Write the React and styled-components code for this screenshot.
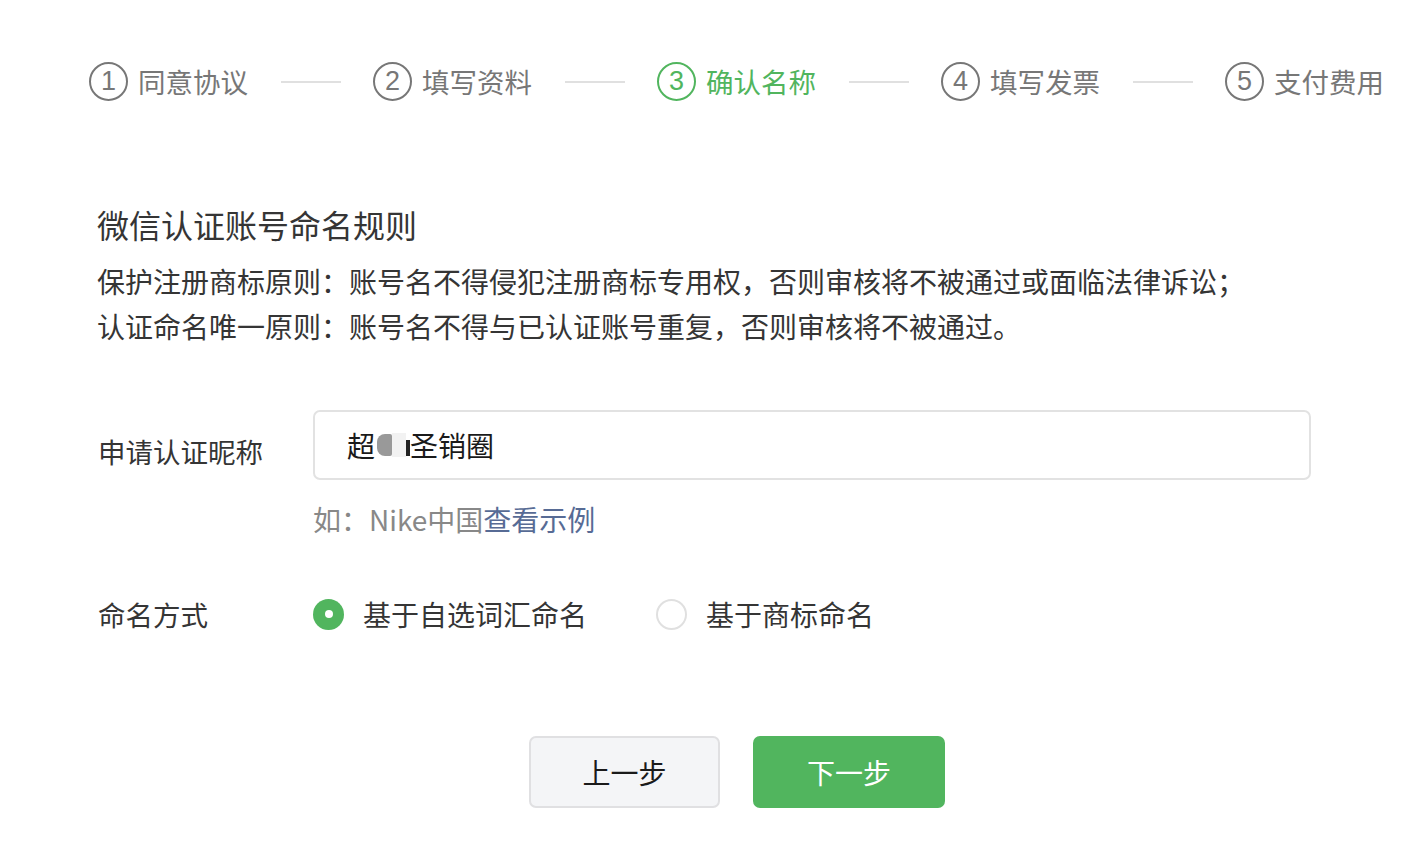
import React from "react";
import styled, { createGlobalStyle } from "styled-components";

const GlobalStyle = createGlobalStyle`
  html, body { margin: 0; padding: 0; background: #fff; }
  body {
    font-family: "Noto Sans CJK SC", "Noto Sans", sans-serif;
    color: #353535;
  }
  * { box-sizing: border-box; }
`;

const Page = styled.div`
  width: 1404px;
  height: 850px;
  overflow: hidden;
  display: flex;
  flex-direction: column;
`;

const Steps = styled.div`
  display: flex;
  align-items: center;
  margin-top: 62px;
  padding-left: 89px;
  height: 39px;
`;

const Step = styled.div`
  display: flex;
  align-items: center;
  gap: 10px;
  color: ${(p) => (p.$active ? "#51b55e" : "#777")};
`;

const StepNum = styled.span`
  width: 39px;
  height: 39px;
  border-radius: 50%;
  border: 2px solid currentColor;
  display: flex;
  align-items: center;
  justify-content: center;
  font-family: "Liberation Sans", "Noto Sans", sans-serif;
  font-size: 27px;
  line-height: 1;
`;

const StepText = styled.span`
  font-size: 27.5px;
  line-height: 39px;
  white-space: nowrap;
`;

const StepLine = styled.span`
  width: 60px;
  height: 2px;
  background: #e0e0e0;
  margin: 0 32px 0 33px;
`;

const Content = styled.div`
  padding-left: 97px;
  display: flex;
  flex-direction: column;
`;

const Title = styled.h2`
  margin: 101px 0 0;
  font-size: 32px;
  font-weight: 400;
  line-height: 44px;
  color: #353535;
`;

const Rules = styled.p`
  margin: 13px 0 0;
  font-size: 28px;
  line-height: 45px;
  color: #353535;
  white-space: nowrap;
`;

const FormRow = styled.div`
  display: flex;
  align-items: ${(p) => p.$align || "flex-start"};
  margin-top: ${(p) => p.$top}px;
`;

const Label = styled.div`
  width: 216px;
  flex: none;
  font-size: 27.5px;
  line-height: ${(p) => p.$lh || 40}px;
  padding-top: ${(p) => p.$pt || 0}px;
  color: #353535;
  padding-left: 1px;
`;

const Field = styled.div`
  display: flex;
  flex-direction: column;
`;

const InputBox = styled.div`
  width: 998px;
  height: 70px;
  border: 2px solid #e2e2e2;
  border-radius: 7px;
  padding-left: 32px;
  display: flex;
  align-items: center;
  font-size: 28px;
  color: #1a1a1a;
`;

const Mosaic = styled.span`
  display: inline-flex;
  align-items: center;
  height: 24px;
  margin: 0 0 0 2px;
`;

const MosaicDark = styled.span`
  width: 15px;
  height: 22px;
  border-radius: 8px 2px 2px 8px;
  background: #999;
`;

const MosaicLight = styled.span`
  width: 14px;
  height: 24px;
  background: #f2f2f2;
`;

const MosaicInk = styled.span`
  width: 4px;
  height: 16px;
  background: #222;
  margin-top: 6px;
`;

const Hint = styled.div`
  margin-top: 19px;
  font-size: 28px;
  line-height: 40px;
  color: #888;
`;

const HintLink = styled.a`
  color: #576b95;
  text-decoration: none;
`;

const Options = styled.div`
  display: flex;
  align-items: center;
  gap: 69px;
`;

const Option = styled.label`
  display: flex;
  align-items: center;
  gap: 19px;
  font-size: 28px;
  line-height: 40px;
  color: #353535;
`;

const Radio = styled.span`
  width: 31px;
  height: 31px;
  border-radius: 50%;
  display: flex;
  align-items: center;
  justify-content: center;
  background: ${(p) => (p.$checked ? "#51b55e" : "#fff")};
  border: ${(p) => (p.$checked ? "none" : "2px solid #e0e0e0")};
  &::after {
    content: "";
    display: ${(p) => (p.$checked ? "block" : "none")};
    width: 8px;
    height: 8px;
    border-radius: 50%;
    background: #fff;
  }
`;

const Buttons = styled.div`
  display: flex;
  gap: 33px;
  margin: 102px 0 0 432px;
`;

const Button = styled.button`
  width: ${(p) => (p.$primary ? 192 : 191)}px;
  height: 72px;
  border-radius: 7px;
  font-family: inherit;
  font-size: 28px;
  cursor: pointer;
  border: ${(p) => (p.$primary ? "none" : "2px solid #e0e0e2")};
  background: ${(p) => (p.$primary ? "#51b55e" : "#f4f5f7")};
  color: ${(p) => (p.$primary ? "#fff" : "#1a1a1a")};
`;

const steps = ["同意协议", "填写资料", "确认名称", "填写发票", "支付费用"];

export default function App() {
  return (
    <Page>
      <GlobalStyle />
      <Steps>
        {steps.map((s, i) => (
          <React.Fragment key={s}>
            <Step $active={i === 2}>
              <StepNum>{i + 1}</StepNum>
              <StepText>{s}</StepText>
            </Step>
            {i < steps.length - 1 && <StepLine />}
          </React.Fragment>
        ))}
      </Steps>
      <Content>
        <Title>微信认证账号命名规则</Title>
        <Rules>
          保护注册商标原则：账号名不得侵犯注册商标专用权，否则审核将不被通过或面临法律诉讼；
          <br />
          认证命名唯一原则：账号名不得与已认证账号重复，否则审核将不被通过。
        </Rules>
        <FormRow $top={61}>
          <Label $lh={70} $pt={6}>申请认证昵称</Label>
          <Field>
            <InputBox>
              超
              <Mosaic>
                <MosaicDark />
                <MosaicLight />
                <MosaicInk />
              </Mosaic>
              圣销圈
            </InputBox>
            <Hint>
              如：Nike中国<HintLink href="#">查看示例</HintLink>
            </Hint>
          </Field>
        </FormRow>
        <FormRow $top={55} $align="center">
          <Label>命名方式</Label>
          <Options>
            <Option>
              <Radio $checked />
              基于自选词汇命名
            </Option>
            <Option>
              <Radio />
              基于商标命名
            </Option>
          </Options>
        </FormRow>
        <Buttons>
          <Button>上一步</Button>
          <Button $primary>下一步</Button>
        </Buttons>
      </Content>
    </Page>
  );
}
